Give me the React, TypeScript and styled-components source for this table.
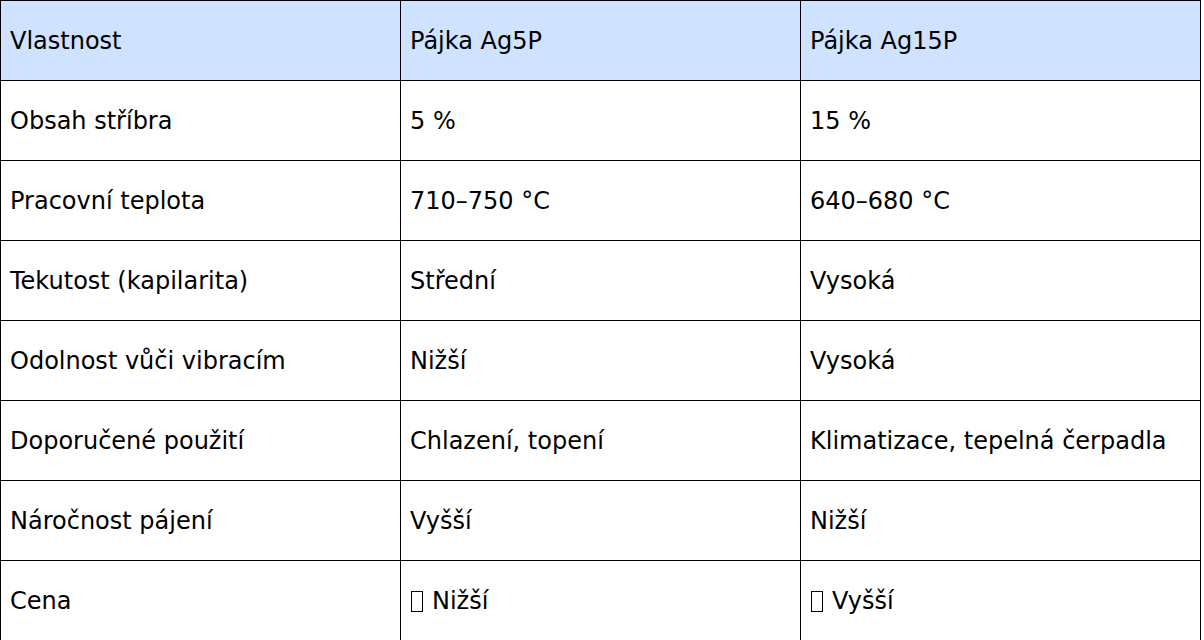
import React from "react";
import styled, { createGlobalStyle } from "styled-components";

const Global = createGlobalStyle`
  html, body { margin: 0; padding: 0; background: #fff; }
  body { font-family: "DejaVu Sans", sans-serif; color: #000; }
`;

const Table = styled.table`
  border-collapse: collapse;
  table-layout: fixed;
  width: 1201px;
  font-family: "DejaVu Sans", sans-serif;
  font-size: 24px;
`;

const Row = styled.tr`
  height: 80px;
`;

const HeadCell = styled.th`
  background: #cfe2ff;
  border: 1px solid #000;
  padding: 0 9px;
  text-align: left;
  font-weight: normal;
  width: 400px;
  box-sizing: border-box;
`;

const Cell = styled.td`
  border: 1px solid #000;
  padding: 0 9px;
  text-align: left;
  white-space: nowrap;
`;

const Tofu = styled.span`
  display: inline-block;
  width: 12px;
  height: 21px;
  border: 1px solid #000;
  box-sizing: border-box;
  vertical-align: -3px;
  margin-right: 9px;
  margin-left: 1px;
`;

const rows: [string, React.ReactNode, React.ReactNode][] = [
  ["Obsah stříbra", "5 %", "15 %"],
  ["Pracovní teplota", "710–750 °C", "640–680 °C"],
  ["Tekutost (kapilarita)", "Střední", "Vysoká"],
  ["Odolnost vůči vibracím", "Nižší", "Vysoká"],
  ["Doporučené použití", "Chlazení, topení", "Klimatizace, tepelná čerpadla"],
  ["Náročnost pájení", "Vyšší", "Nižší"],
  [
    "Cena",
    <>
      <Tofu aria-hidden />
      Nižší
    </>,
    <>
      <Tofu aria-hidden />
      Vyšší
    </>,
  ],
];

export default function App() {
  return (
    <>
      <Global />
      <Table>
        <thead>
          <Row>
            <HeadCell>Vlastnost</HeadCell>
            <HeadCell>Pájka Ag5P</HeadCell>
            <HeadCell>Pájka Ag15P</HeadCell>
          </Row>
        </thead>
        <tbody>
          {rows.map(([a, b, c], i) => (
            <Row key={i}>
              <Cell>{a}</Cell>
              <Cell>{b}</Cell>
              <Cell>{c}</Cell>
            </Row>
          ))}
        </tbody>
      </Table>
    </>
  );
}
